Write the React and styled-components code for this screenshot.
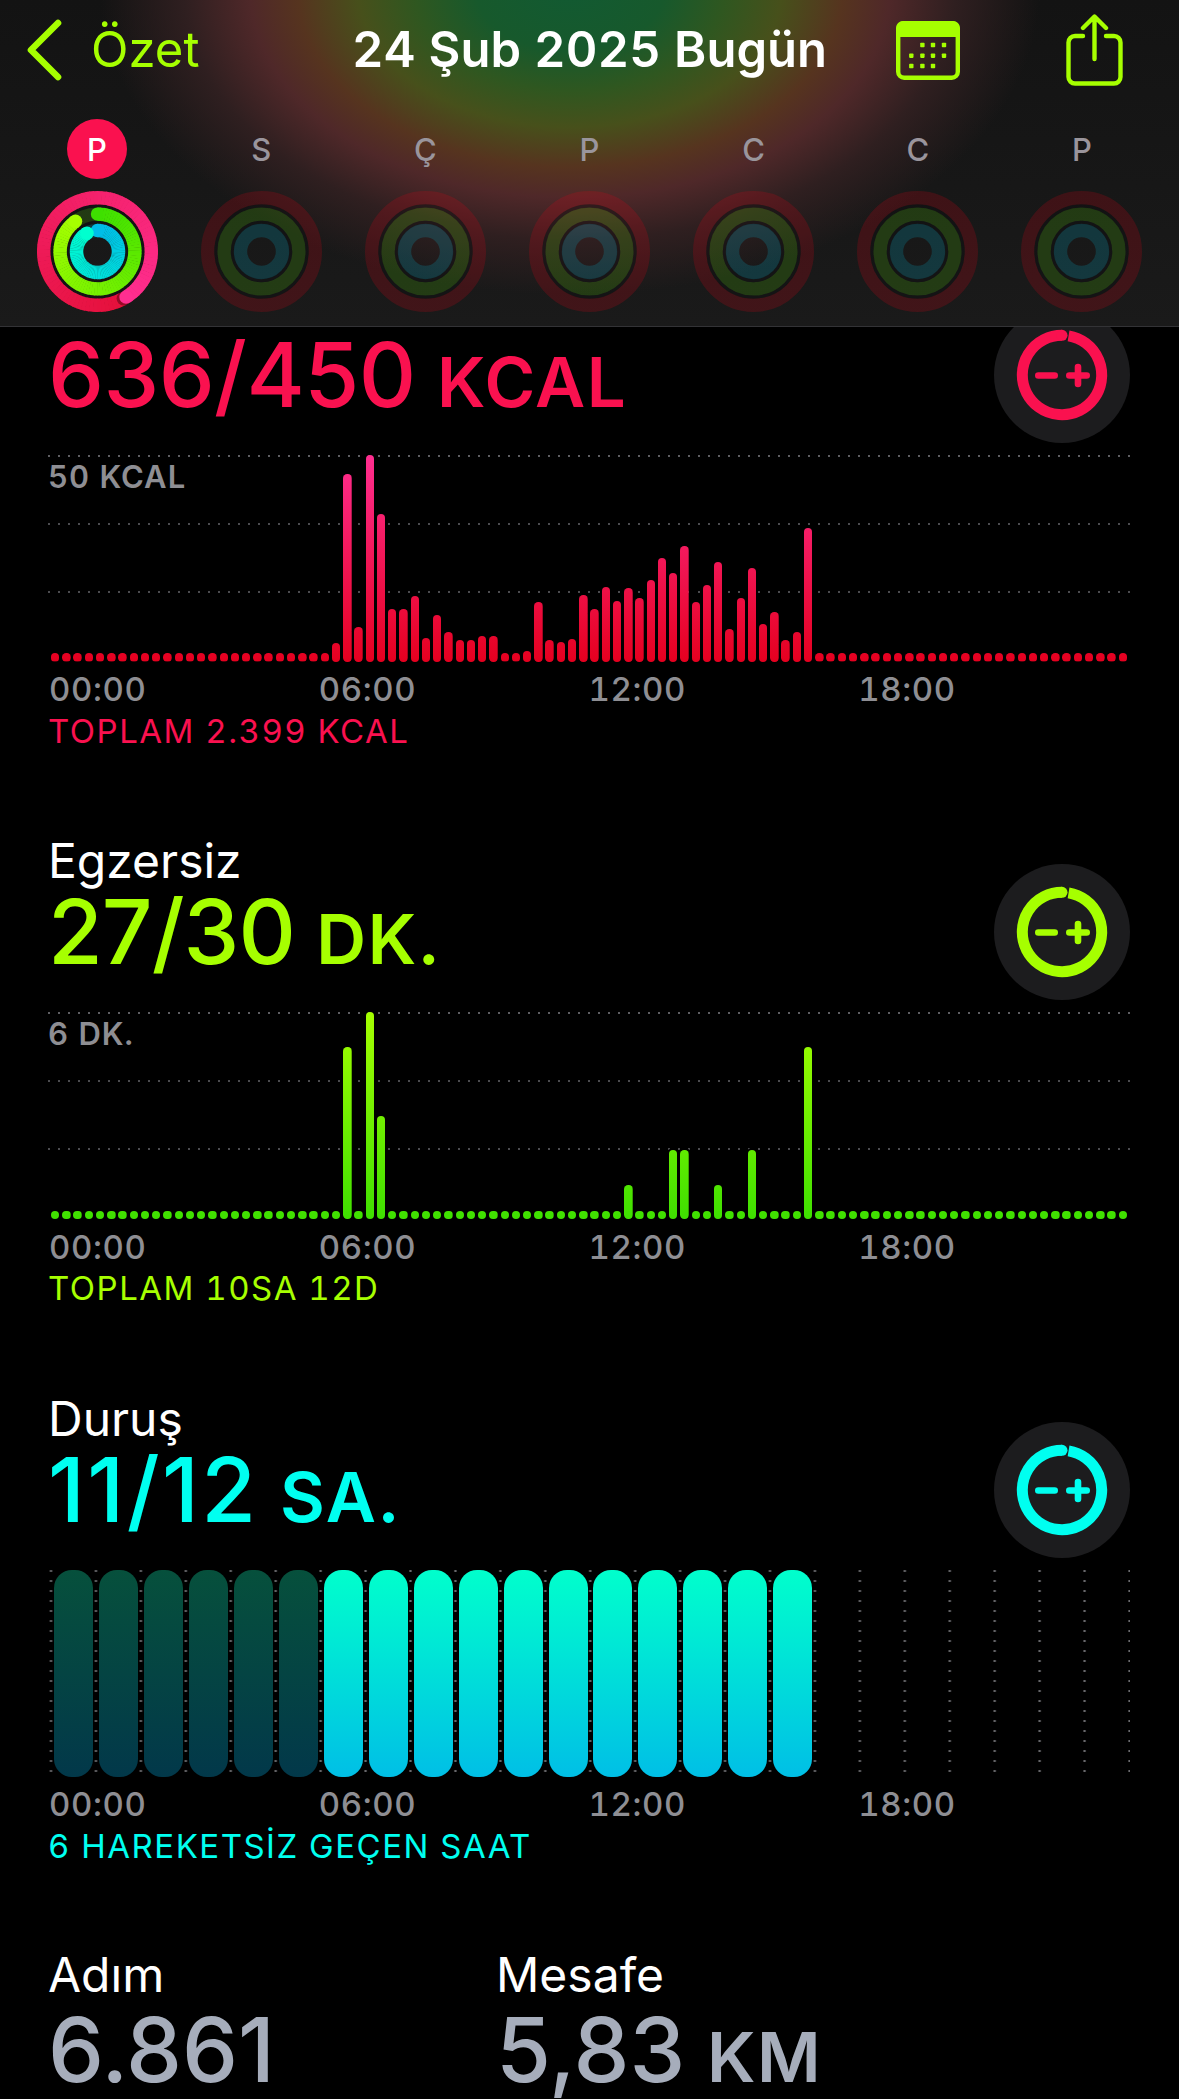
import React from 'react'
import styled, { createGlobalStyle } from 'styled-components'

const LIME = '#a6ff00'
const RED = '#fa114f'
const CYAN = '#00fff0'

const GlobalStyle = createGlobalStyle`
    html, body {
        margin: 0;
        padding: 0;
        background: #000;
    }
    body {
        font-family: Inter, "Liberation Sans", sans-serif;
        font-variant-numeric: tabular-nums;
    }
`

const Page = styled.div`
    position: relative;
    width: 1179px;
    height: 2099px;
    overflow: hidden;
    background: #000;
`

const Header = styled.header`
    position: absolute;
    top: 0;
    left: 0;
    right: 0;
    z-index: 2;
    height: 327px;
    box-sizing: border-box;
    border-bottom: 1px solid #333336;
    background:
        radial-gradient(ellipse 470px 305px at 570px -10px,
            #125a32 0%,
            #17592c 20%,
            #2f5720 33%,
            #47501b 45%,
            #56341f 58%,
            #4f2829 68%,
            #2f1f20 82%,
            rgba(30, 22, 24, 0) 100%),
        linear-gradient(#131313, #1a1a1a);
`

const TopBar = styled.div`
    display: grid;
    grid-template-columns: 1fr auto 1fr;
    align-items: center;
    height: 100px;
`

const BackLink = styled.div`
    display: flex;
    align-items: center;
    gap: 26px;
    padding-left: 25px;
    color: ${LIME};
    font-size: 49px;
    line-height: 56px;
`

const Title = styled.div`
    color: #fff;
    font-size: 49px;
    font-weight: 600;
    line-height: 56px;
`

const Actions = styled.div`
    display: flex;
    justify-content: flex-end;
    align-items: center;
    gap: 106px;
    padding-right: 56px;
`

const Week = styled.div`
    display: grid;
    grid-template-columns: repeat(7, 1fr);
    padding: 19px 15px 0;
`

const Day = styled.div`
    display: flex;
    flex-direction: column;
    align-items: center;
    gap: 11.5px;
`

const DayLetter = styled.div`
    width: 60px;
    height: 60px;
    border-radius: 50%;
    display: flex;
    align-items: center;
    justify-content: center;
    font-size: 31px;
    font-weight: 500;
    color: ${p => (p.$today ? '#fff' : '#9a959c')};
    background: ${p => (p.$today ? RED : 'transparent')};
`

const Content = styled.main`
    padding: 276.5px 49px 0 48px;
`

const Section = styled.section`
    margin-bottom: 83.5px;
`

const TopRow = styled.div`
    display: flex;
    justify-content: space-between;
    align-items: flex-end;
    margin-bottom: 36px;
`

const Label = styled.div`
    min-height: 54px;
    color: #fff;
    font-size: 48px;
    line-height: 54px;
`

const Value = styled.div`
    color: ${p => p.$color};
    font-size: 89px;
    font-weight: 500;
    font-variant-numeric: proportional-nums;
    line-height: 88px;
    letter-spacing: ${p => p.$spacing || 0}px;
    white-space: nowrap;
`

const Unit = styled.span`
    margin-left: 21.5px;
    font-size: 69px;
    font-weight: 600;
    line-height: 50px;
    letter-spacing: 1.5px;
`

const GaugeButton = styled.div`
    width: 136px;
    height: 136px;
    margin-bottom: -24px;
    border-radius: 50%;
    background: #1c1c1e;
    flex-shrink: 0;

    svg {
        display: block;
    }
`

const Chart = styled.div`
    position: relative;
    height: 207px;
    padding: 0 1.5px;
    background-image:
        linear-gradient(to right, #5f5f63 2px, transparent 2px),
        linear-gradient(to right, #4c4c50 2px, transparent 2px),
        linear-gradient(to right, #4c4c50 2px, transparent 2px);
    background-size: 10px 2px;
    background-repeat: repeat-x;
    background-position: 0 0, 0 68px, 0 136px;
`

const ChartCaption = styled.div`
    position: absolute;
    top: 4px;
    left: 0;
    color: #8e8e93;
    font-size: 31px;
    font-weight: 600;
    line-height: 36px;
    letter-spacing: 1px;
`

const Bars = styled.div`
    display: grid;
    grid-template-columns: repeat(96, 1fr);
    justify-items: center;
    align-items: end;
    height: 100%;
`

const Bar = styled.div`
    width: 8.4px;
    min-height: 8.4px;
    border-radius: 4.2px;
    box-shadow: 0 0 0 2px #000;
    background: linear-gradient(to top, ${p => p.$bottom}, ${p => p.$top}) bottom / 100% 207px no-repeat;
`

const StandChart = styled.div`
    display: grid;
    grid-template-columns: repeat(24, 1fr);
    height: 207px;
    padding: 0 0 0 3px;
    background-image: radial-gradient(circle, #6a6a6e 1px, transparent 1.3px);
    background-size: 44.95px 10px;
    background-position: -19.47px -4px;
`

const StandBar = styled.div`
    width: 39px;
    margin-left: 3px;
    border-radius: 18px;
    background: ${p => p.$dim
        ? 'linear-gradient(to bottom, #06503c, #02384a)'
        : 'linear-gradient(to bottom, #00ffcc, #00bfe6)'};
`

const Hours = styled.div`
    display: grid;
    grid-template-columns: repeat(4, 1fr);
    width: 1079px;
    padding-left: 1px;
    margin-top: 8.5px;
    color: #8e8e93;
    font-size: 33px;
    font-weight: 500;
    line-height: 38px;
    letter-spacing: 0.6px;
`

const Total = styled.div`
    margin-top: 2.5px;
    color: ${p => p.$color};
    font-size: 33px;
    line-height: 40px;
    letter-spacing: 1.5px;
`

const Stats = styled.div`
    display: grid;
    grid-template-columns: 448px auto;
    margin-top: -1px;
`

const StatValue = styled(Value)`
    margin-top: 4px;
    color: #a6adbb;
`

const polar = (r, deg, c) => {
    const a = ((deg - 90) * Math.PI) / 180
    return [c + r * Math.cos(a), c + r * Math.sin(a)]
}

const arcPath = (r, from, to, c) => {
    const [x1, y1] = polar(r, from, c)
    const [x2, y2] = polar(r, to, c)
    const large = Math.abs(to - from) > 180 ? 1 : 0
    return `M${x1} ${y1}A${r} ${r} 0 ${large} 1 ${x2} ${y2}`
}

const hex = v => parseInt(v, 16)
const mix = (a, b, t) => {
    const part = i => Math.round(hex(a.substr(i, 2)) + (hex(b.substr(i, 2)) - hex(a.substr(i, 2))) * t)
    return `rgb(${part(1)},${part(3)},${part(5)})`
}

// gradient arc, svg has no conic fill so it is cut in small pieces
const GradientArc = ({ r, from, sweep, start, end, cap = true }) => {
    const step = 4
    const pieces = []
    for (let d = 0; d < sweep; d += step) {
        pieces.push(
            <path
                key={d}
                d={arcPath(r, from + d, Math.min(from + d + step + 0.6, from + sweep), 60.5)}
                fill="none"
                strokeWidth="13.4"
                stroke={mix(start, end, d / sweep)}
            />
        )
    }
    const [sx, sy] = polar(r, from, 60.5)
    const [ex, ey] = polar(r, from + sweep, 60.5)
    const [hx, hy] = polar(r, from + sweep + 3, 60.5)
    return (
        <>
            {cap && <circle cx={sx} cy={sy} r="6.7" fill={start} />}
            {pieces}
            {!cap && <circle cx={hx} cy={hy} r="7" fill="#000" opacity="0.35" />}
            <circle cx={ex} cy={ey} r="6.7" fill={end} />
        </>
    )
}

const Ring = ({ active }) => (
    <svg width="121" height="121" viewBox="0 0 121 121">
        <circle cx="60.5" cy="60.5" r="53.8" fill="none" strokeWidth="13.4" stroke="rgba(235,0,20,0.19)" />
        <circle cx="60.5" cy="60.5" r="45.5" fill="none" strokeWidth="3.4" stroke="rgba(12,12,14,0.4)" />
        <circle cx="60.5" cy="60.5" r="37.4" fill="none" strokeWidth="13.4" stroke="rgba(95,240,0,0.16)" />
        <circle cx="60.5" cy="60.5" r="29" fill="none" strokeWidth="3.4" stroke="rgba(12,12,14,0.4)" />
        <circle cx="60.5" cy="60.5" r="21" fill="none" strokeWidth="13.4" stroke="rgba(0,215,250,0.17)" />
        {active && (
            <>
                <GradientArc r={53.8} from={148} sweep={360} start="#e5103a" end="#ff2e90" cap={false} />
                <GradientArc r={37.4} from={0} sweep={324} start="#3ee000" end="#a6ff00" />
                <GradientArc r={21} from={0} sweep={330} start="#00bce8" end="#00ffcf" />
            </>
        )}
    </svg>
)

const Gauge = ({ color }) => {
    const [hx, hy] = polar(39.7, 0, 68)
    return (
        <GaugeButton>
            <svg width="136" height="136" viewBox="0 0 136 136">
                <path d={arcPath(39.7, 9.5, 360, 68)} fill="none" stroke={color} strokeWidth="11" />
                <circle cx={hx} cy={hy} r="5.5" fill={color} />
                <path d="M44.3 68.5H60.7M75.3 68.5H92.7M84 60V77" fill="none" stroke={color} strokeWidth="6.6" strokeLinecap="round" />
            </svg>
        </GaugeButton>
    )
}

const BackIcon = () => (
    <svg width="40" height="62" viewBox="0 0 40 62">
        <path d="M33 4L6 31L33 58" fill="none" stroke={LIME} strokeWidth="6.6" strokeLinecap="round" strokeLinejoin="round" />
    </svg>
)

const calendarDots = [
    [26.4, 24], [37, 24], [48, 24],
    [15.3, 34.7], [26.4, 34.7], [37, 34.7], [48, 34.7],
    [15.3, 45], [26.4, 45], [37, 45],
]

const CalendarIcon = () => (
    <svg width="64" height="59" viewBox="0 0 64 59">
        <rect x="2.2" y="2.2" width="59.6" height="54.6" rx="6" fill="none" stroke={LIME} strokeWidth="4.4" />
        <path d="M0 16V7a7 7 0 0 1 7-7H57a7 7 0 0 1 7 7V16H0Z" fill={LIME} />
        {calendarDots.map(([x, y]) => (
            <rect key={`${x}-${y}`} x={x - 2.2} y={y - 2.2} width="4.4" height="4.4" rx="0.8" fill={LIME} />
        ))}
    </svg>
)

const ShareIcon = () => (
    <svg width="57" height="72" viewBox="0 0 57 72" fill="none" stroke={LIME} strokeWidth="4.4" strokeLinecap="round" strokeLinejoin="round">
        <path d="M17 22H9a6.5 6.5 0 0 0-6.5 6.5V63A6.5 6.5 0 0 0 9 69.5H48a6.5 6.5 0 0 0 6.5-6.5V28.5a6.5 6.5 0 0 0-6.5-6.5H40" />
        <path d="M28.5 45V3M17 14L28.5 2.5L40 14" />
    </svg>
)

const moveBars = {
    25: 19, 26: 188, 27: 35, 28: 207, 29: 148, 30: 53, 31: 53, 32: 66, 33: 24, 34: 47,
    35: 30, 36: 22, 37: 22, 38: 26, 39: 26, 42: 11, 43: 60, 44: 22, 45: 20, 46: 23,
    47: 67, 48: 53, 49: 75, 50: 61, 51: 74, 52: 64, 53: 82, 54: 104, 55: 89, 56: 116,
    57: 60, 58: 77, 59: 100, 60: 33, 61: 64, 62: 94, 63: 38, 64: 50, 65: 22, 66: 30, 67: 134,
}

const exerciseBars = {
    26: 172, 28: 207, 29: 103, 51: 34, 55: 69, 56: 69, 59: 34, 62: 69, 67: 172,
}

const slots = Array.from({ length: 96 }, (_, i) => i)
const hours = ['00:00', '06:00', '12:00', '18:00']

const BarChart = ({ data, caption, top, bottom }) => (
    <Chart>
        <Bars>
            {slots.map(i => (
                <Bar key={i} $top={top} $bottom={bottom} style={{ height: data[i] || 8.4 }} />
            ))}
        </Bars>
        <ChartCaption>{caption}</ChartCaption>
    </Chart>
)

const HourLabels = () => (
    <Hours>
        {hours.map(h => <div key={h}>{h}</div>)}
    </Hours>
)

const App = () => (
    <Page>
        <GlobalStyle />
        <Header>
            <TopBar>
                <BackLink>
                    <BackIcon />
                    <span>Özet</span>
                </BackLink>
                <Title>24 Şub 2025 Bugün</Title>
                <Actions>
                    <CalendarIcon />
                    <ShareIcon />
                </Actions>
            </TopBar>
            <Week>
                {['P', 'S', 'Ç', 'P', 'C', 'C', 'P'].map((d, i) => (
                    <Day key={i}>
                        <DayLetter $today={i === 0}>{d}</DayLetter>
                        <Ring active={i === 0} />
                    </Day>
                ))}
            </Week>
        </Header>

        <Content>
            <Section>
                <TopRow>
                    <div>
                        <Label />
                        <Value $color={RED} $spacing={-0.6}>636/450<Unit>KCAL</Unit></Value>
                    </div>
                    <Gauge color={RED} />
                </TopRow>
                <BarChart data={moveBars} caption="50 KCAL" top="#ff2e90" bottom="#e5001f" />
                <HourLabels />
                <Total $color={RED}>TOPLAM 2.399 KCAL</Total>
            </Section>

            <Section>
                <TopRow>
                    <div>
                        <Label>Egzersiz</Label>
                        <Value $color={LIME} $spacing={-1}>27/30<Unit>DK.</Unit></Value>
                    </div>
                    <Gauge color={LIME} />
                </TopRow>
                <BarChart data={exerciseBars} caption="6 DK." top="#a6ff00" bottom="#3ee000" />
                <HourLabels />
                <Total $color={LIME}>TOPLAM 10SA 12D</Total>
            </Section>

            <Section>
                <TopRow>
                    <div>
                        <Label>Duruş</Label>
                        <Value $color={CYAN} $spacing={2.4}>11/12<Unit>SA.</Unit></Value>
                    </div>
                    <Gauge color={CYAN} />
                </TopRow>
                <StandChart>
                    {Array.from({ length: 17 }, (_, i) => <StandBar key={i} $dim={i < 6} />)}
                </StandChart>
                <HourLabels />
                <Total $color={CYAN}>6 HAREKETSİZ GEÇEN SAAT</Total>
            </Section>

            <Stats>
                <div>
                    <Label>Adım</Label>
                    <StatValue>6.861</StatValue>
                </div>
                <div>
                    <Label>Mesafe</Label>
                    <StatValue>5,83<Unit>KM</Unit></StatValue>
                </div>
            </Stats>
        </Content>
    </Page>
)

export default App
